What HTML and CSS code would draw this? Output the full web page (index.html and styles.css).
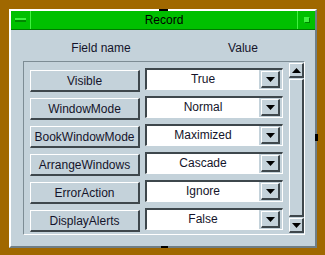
FILE: index.html
```html
<!DOCTYPE html>
<html lang="en">
<head>
    <meta charset="UTF-8">
    <title>Record</title>
    <link rel="stylesheet" href="styles.css">
</head>
<body>
    <div class="window">
        <span class="handle handle-top"></span>
        <span class="handle handle-right"></span>
        <span class="handle handle-bottom"></span>

        <div class="titlebar">
            <div class="tb-btn tb-min"><span class="min-glyph"></span></div>
            <div class="tb-title">Record</div>
            <div class="tb-btn tb-max"><span class="max-glyph"></span></div>
        </div>

        <div class="content">
            <div class="header">
                <span>Field name</span>
                <span>Value</span>
            </div>

            <div class="panel">
                <div class="rows">
                    <div class="row">
                        <button class="field">Visible</button>
                        <div class="select">
                            <span class="select-text">True</span>
                            <span class="select-arrow"><svg width="9" height="5" viewBox="0 0 9 5"><path d="M0 0H9L4.5 5Z" fill="#000"/></svg></span>
                        </div>
                    </div>
                    <div class="row">
                        <button class="field">WindowMode</button>
                        <div class="select">
                            <span class="select-text">Normal</span>
                            <span class="select-arrow"><svg width="9" height="5" viewBox="0 0 9 5"><path d="M0 0H9L4.5 5Z" fill="#000"/></svg></span>
                        </div>
                    </div>
                    <div class="row">
                        <button class="field">BookWindowMode</button>
                        <div class="select">
                            <span class="select-text">Maximized</span>
                            <span class="select-arrow"><svg width="9" height="5" viewBox="0 0 9 5"><path d="M0 0H9L4.5 5Z" fill="#000"/></svg></span>
                        </div>
                    </div>
                    <div class="row">
                        <button class="field">ArrangeWindows</button>
                        <div class="select">
                            <span class="select-text">Cascade</span>
                            <span class="select-arrow"><svg width="9" height="5" viewBox="0 0 9 5"><path d="M0 0H9L4.5 5Z" fill="#000"/></svg></span>
                        </div>
                    </div>
                    <div class="row">
                        <button class="field">ErrorAction</button>
                        <div class="select">
                            <span class="select-text">Ignore</span>
                            <span class="select-arrow"><svg width="9" height="5" viewBox="0 0 9 5"><path d="M0 0H9L4.5 5Z" fill="#000"/></svg></span>
                        </div>
                    </div>
                    <div class="row">
                        <button class="field">DisplayAlerts</button>
                        <div class="select">
                            <span class="select-text">False</span>
                            <span class="select-arrow"><svg width="9" height="5" viewBox="0 0 9 5"><path d="M0 0H9L4.5 5Z" fill="#000"/></svg></span>
                        </div>
                    </div>
                </div>

                <div class="scrollbar">
                    <span class="sb-btn"><svg width="9" height="5" viewBox="0 0 9 5"><path d="M0 5H9L4.5 0Z" fill="#000"/></svg></span>
                    <span class="sb-thumb"></span>
                    <span class="sb-btn"><svg width="9" height="5" viewBox="0 0 9 5"><path d="M0 0H9L4.5 5Z" fill="#000"/></svg></span>
                </div>
            </div>
        </div>
    </div>
</body>
</html>
```

FILE: styles.css
```css
body {
    margin: 0;
    background: #a06800;
    font-family: "Liberation Sans", Arial, sans-serif;
    font-size: 12px;
    color: #14142a;
}

.window {
    position: relative;
    box-sizing: border-box;
    width: 308px;
    height: 239px;
    margin: 9px 0 0 9px;
    background: #c4d2da;
    border: 2px solid;
    border-color: #ffffff #6f7e86 #6f7e86 #ffffff;
}

.handle {
    position: absolute;
    background: #000;
}

.handle-top { top: -2px; left: 148px; width: 9px; height: 2px; }
.handle-right { right: -3px; top: 123px; width: 3px; height: 7px; }
.handle-bottom { bottom: -3px; left: 150px; width: 7px; height: 3px; }

/* title bar */
.titlebar {
    display: flex;
    height: 18px;
    background: #00c000;
    border-bottom: 1px solid #007a00;
}

.tb-btn {
    display: flex;
    align-items: center;
    justify-content: center;
    width: 19px;
}

.tb-min { border-right: 1px solid #40f040; }
.tb-max { border-left: 1px solid #40f040; width: 17px; }

.min-glyph {
    width: 11px;
    height: 2px;
    background: #40f040;
    border-bottom: 2px solid #008800;
}

.max-glyph {
    width: 4px;
    height: 4px;
    background: #40f040;
    border: 1px solid;
    border-color: #40f040 #008800 #008800 #40f040;
}

.tb-title {
    flex: 1;
    text-align: center;
    line-height: 18px;
    color: #000;
}

/* header */
.header {
    display: grid;
    grid-template-columns: 142px 142px;
    height: 31px;
    padding: 11px 0 0 19px;
    box-sizing: border-box;
    line-height: 14px;
}

.header span { text-align: center; }

/* panel with rows */
.panel {
    display: flex;
    box-sizing: border-box;
    width: 282px;
    height: 174px;
    margin-left: 12px;
    border: 1px solid;
    border-color: #7d8c94 #ffffff #ffffff #7d8c94;
}

.rows {
    width: 258px;
    padding: 6px 5px 0 6px;
}

.row {
    display: flex;
    gap: 5px;
    height: 28px;
}

.field {
    box-sizing: border-box;
    width: 110px;
    height: 22px;
    margin: 2px 0 0 0;
    padding: 0;
    background: #c4d2da;
    border: solid;
    border-width: 1px 2px 2px 1px;
    border-color: #ffffff #3e474c #3e474c #ffffff;
    font: inherit;
    color: inherit;
}

.select {
    display: flex;
    box-sizing: border-box;
    width: 138px;
    height: 22px;
    background: #c4d2da;
    border: solid;
    border-width: 2px 1px 1px 2px;
    border-color: #3e474c #ffffff #ffffff #3e474c;
}

.select-text {
    flex: 1;
    background: #fff;
    text-align: center;
    line-height: 18px;
}

.select-arrow {
    display: flex;
    align-items: center;
    justify-content: center;
    box-sizing: border-box;
    width: 19px;
    height: 17px;
    margin: 1px 2px 0 2px;
    border: solid;
    border-width: 1px 2px 2px 1px;
    border-color: #ffffff #3e474c #3e474c #ffffff;
}

/* scrollbar */
.scrollbar {
    display: flex;
    flex-direction: column;
    width: 15px;
    height: 170px;
    margin-top: 1px;
}

.sb-btn {
    display: flex;
    align-items: center;
    justify-content: center;
    box-sizing: border-box;
    height: 15px;
    border: solid;
    border-width: 1px 2px 2px 1px;
    border-color: #ffffff #3e474c #3e474c #ffffff;
}

.sb-thumb {
    flex: 1;
    margin: 1px 0;
    border: solid;
    border-width: 1px 2px 2px 1px;
    border-color: #ffffff #3e474c #3e474c #ffffff;
}
```
